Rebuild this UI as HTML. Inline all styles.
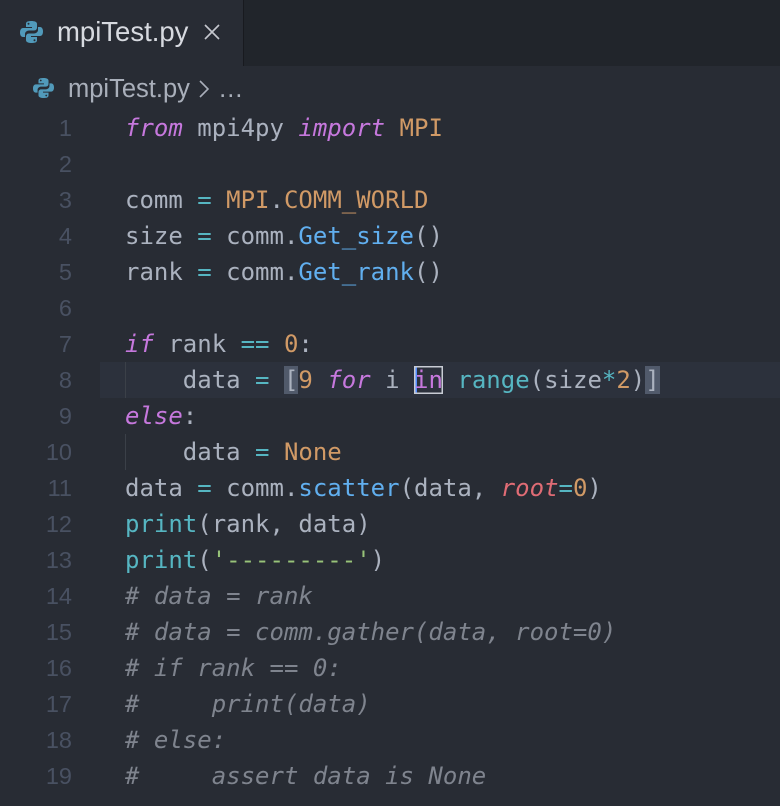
<!DOCTYPE html>
<html><head><meta charset="utf-8"><style>
html,body{margin:0;padding:0;width:780px;height:806px;overflow:hidden;background:#282c34}
.tabbar{position:absolute;left:0;top:0;width:780px;height:66px;background:#21252b}
.tab{position:absolute;left:0;top:0;width:243px;height:66px;background:#282c34;border-right:1px solid #181a1f}
.tab .t{position:absolute;left:57px;top:16px;font:27.5px "Liberation Sans",sans-serif;color:#d7dae0}
.tab .x{position:absolute;left:203px;top:23px}
.crumb{position:absolute;left:68px;top:75px;font:25.5px "Liberation Sans",sans-serif;color:#a9afba}
.ln{position:absolute;left:0;width:72px;text-align:right;font:23.5px "Liberation Sans",sans-serif;color:#495162;line-height:36px}
.code{position:absolute;left:125px;font:24px "DejaVu Sans Mono",monospace;color:#abb2bf;line-height:36px;white-space:pre}
.k{color:#c678dd;font-style:italic}.o{color:#d19a66}.c{color:#56b6c2}.f{color:#61afef}
.r{color:#e06c75;font-style:italic}.s{color:#98c379}.cm{color:#7f848e;font-style:italic}
.hl{position:absolute;left:100px;top:362px;width:680px;height:36px;background:#2c313c}
.g{position:absolute;left:125px;width:1px;height:36px;background:#3b4048}
.br{background:#515a6b}
</style></head><body>
<div class="tabbar"></div>
<div class="tab">
<svg style="position:absolute;left:20px;top:20px" width="23" height="24" viewBox="0 0 23 24"><path d="M11 1C6 1 6 3 6 4v3h6v1H3C1 8 0 10 0 12.5S1 17 3 17h2v-3c0-2 2-3.5 4-3.5h5c2 0 3-1.5 3-3V4c0-2-2-3-6-3z" fill="#519aba"/><path d="M12 23c5 0 5-2 5-3v-3h-6v-1h9c2 0 3-2 3-4.5S22 7 20 7h-2v3c0 2-2 3.5-4 3.5H9c-2 0-3 1.5-3 3V20c0 2 2 3 6 3z" fill="#519aba"/><circle cx="8.5" cy="3.8" r="1" fill="#282c34"/><circle cx="14.5" cy="20.2" r="1" fill="#282c34"/></svg>
<div class="t">mpiTest.py</div>
<svg class="x" width="18" height="18" viewBox="0 0 18 18"><path d="M2 2L16 16M16 2L2 16" stroke="#c5c8ce" stroke-width="1.6"/></svg>
</div>
<svg style="position:absolute;left:33px;top:77px" width="21" height="22" viewBox="0 0 23 24"><path d="M11 1C6 1 6 3 6 4v3h6v1H3C1 8 0 10 0 12.5S1 17 3 17h2v-3c0-2 2-3.5 4-3.5h5c2 0 3-1.5 3-3V4c0-2-2-3-6-3z" fill="#519aba"/><path d="M12 23c5 0 5-2 5-3v-3h-6v-1h9c2 0 3-2 3-4.5S22 7 20 7h-2v3c0 2-2 3.5-4 3.5H9c-2 0-3 1.5-3 3V20c0 2 2 3 6 3z" fill="#519aba"/><circle cx="8.5" cy="3.8" r="1" fill="#282c34"/><circle cx="14.5" cy="20.2" r="1" fill="#282c34"/></svg>
<div class="crumb">mpiTest.py <svg width="14" height="20" viewBox="0 0 14 20" style="vertical-align:-2px"><path d="M3 2L11 10L3 18" stroke="#a9afba" stroke-width="1.6" fill="none"/></svg> …</div>
<div class="hl"></div>
<div class="g" style="top:362px"></div>
<div class="g" style="top:434px"></div>
<div class="ln" style="top:110px">1<br>2<br>3<br>4<br>5<br>6<br>7<br>8<br>9<br>10<br>11<br>12<br>13<br>14<br>15<br>16<br>17<br>18<br>19</div>
<div class="code" style="top:110px"><span class="k">from</span> mpi4py <span class="k">import</span> <span class="o">MPI</span>

comm <span class="c">=</span> <span class="o">MPI</span>.<span class="o">COMM_WORLD</span>
size <span class="c">=</span> comm.<span class="f">Get_size</span>()
rank <span class="c">=</span> comm.<span class="f">Get_rank</span>()

<span class="k">if</span> rank <span class="c">==</span> <span class="o">0</span>:
    data <span class="c">=</span> <span class="br">[</span><span class="o">9</span> <span class="k">for</span> i <span style="box-shadow:inset 0 0 0 1.5px #c8ccd4,inset 3px 0 0 #528bff"><span class="k" style="font-style:normal">in</span></span> <span class="c">range</span>(size<span class="c">*</span><span class="o">2</span>)<span class="br">]</span>
<span class="k">else</span>:
    data <span class="c">=</span> <span class="o">None</span>
data <span class="c">=</span> comm.<span class="f">scatter</span>(data, <span class="r">root</span><span class="c">=</span><span class="o">0</span>)
<span class="c">print</span>(rank, data)
<span class="c">print</span>(<span class="s">'---------'</span>)
<span class="cm"># data = rank</span>
<span class="cm"># data = comm.gather(data, root=0)</span>
<span class="cm"># if rank == 0:</span>
<span class="cm">#     print(data)</span>
<span class="cm"># else:</span>
<span class="cm">#     assert data is None</span></div>
</body></html>
